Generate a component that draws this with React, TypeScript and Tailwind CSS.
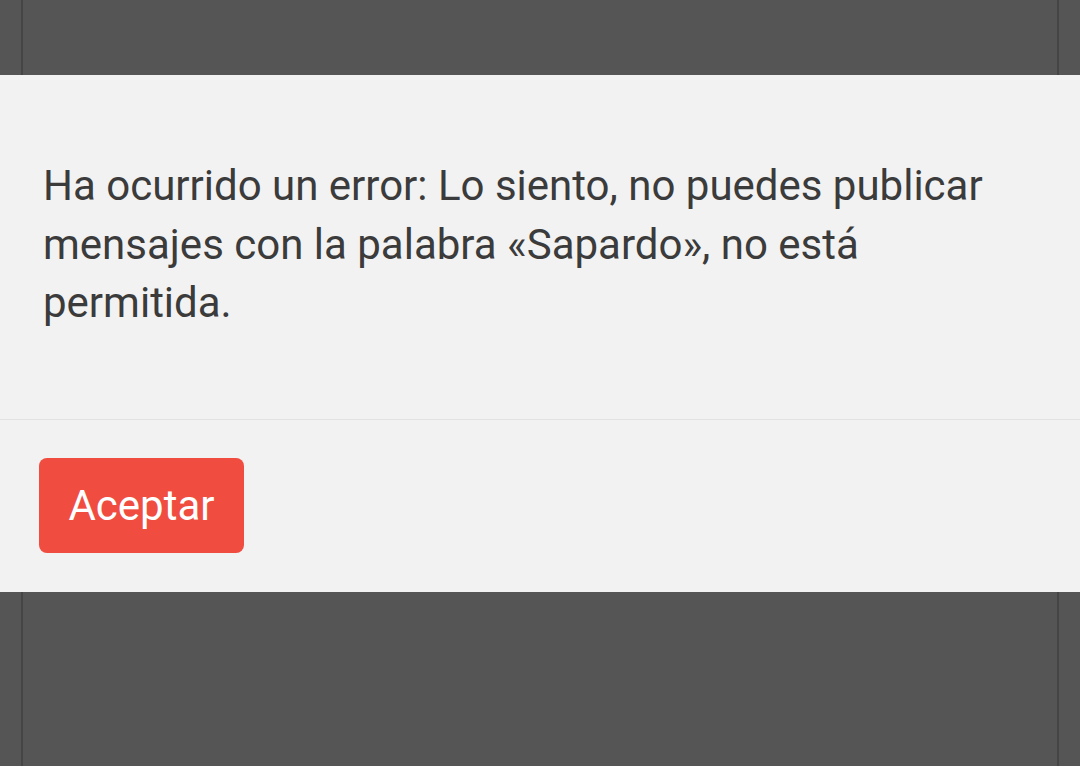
export default function App() {
  return (
    <div className="relative h-[766px] w-[1080px] overflow-hidden bg-[#555555] font-['Roboto',sans-serif]">
      {/* page behind the overlay */}
      <div className="mx-[21px] h-full border-x-2 border-[#454545]" />

      {/* alert dialog */}
      <div className="absolute left-0 right-0 top-[75px] bg-[#f2f2f2]">
        <div className="px-[43px] pb-[86px] pt-[82px]">
          <p className="text-[42px] leading-[58.5px] text-[#3b3b3b]">
            Ha ocurrido un error: Lo siento, no puedes publicar mensajes con la
            palabra «Sapardo», no está permitida.
          </p>
        </div>
        <div className="border-t border-[#e2e2e2] px-[39px] pb-[39px] pt-[38px]">
          <button className="h-[95px] w-[205px] rounded-[8px] bg-[#f04c3f] text-[42px] text-white">
            Aceptar
          </button>
        </div>
      </div>
    </div>
  );
}
